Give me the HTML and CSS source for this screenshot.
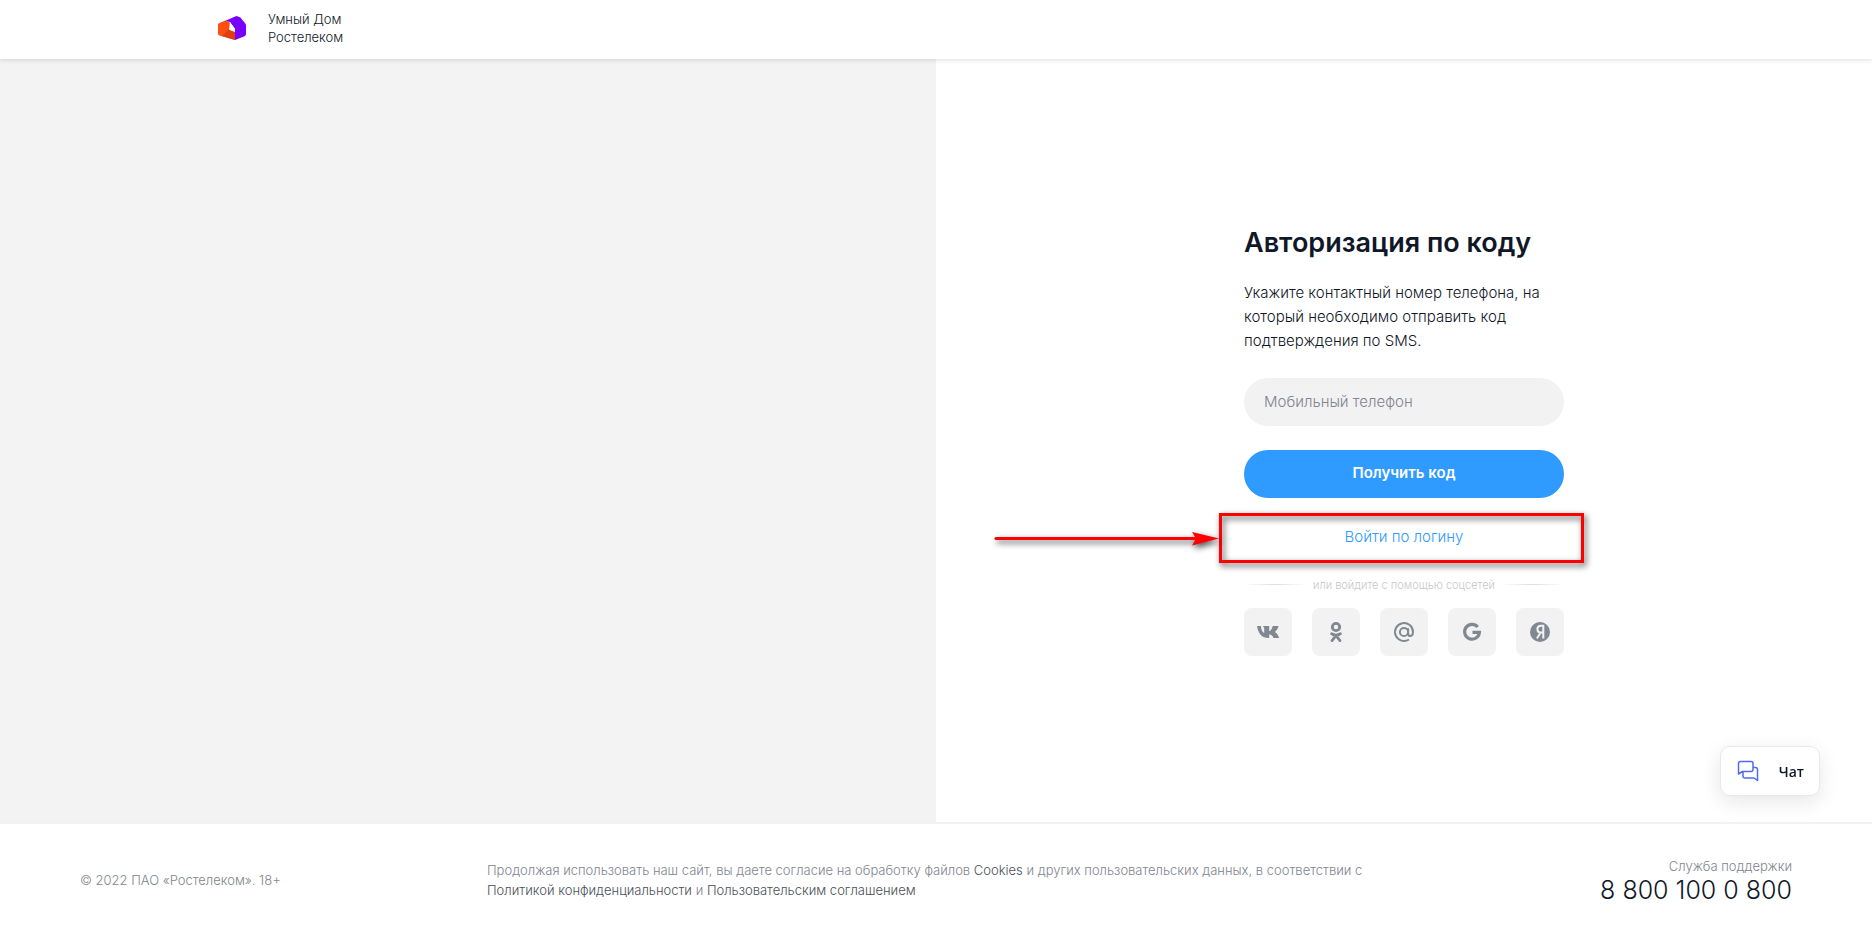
FILE: index.html
```html
<!DOCTYPE html>
<html lang="ru">
<head>
    <meta charset="UTF-8">
    <meta name="viewport" content="width=device-width, initial-scale=1.0">
    <title>Умный Дом Ростелеком</title>
    <link rel="stylesheet" href="styles.css">
</head>
<body>
    <header class="header">
        <a class="logo" href="#">
            <svg class="logo-icon" viewBox="0 0 28 24" aria-hidden="true">
                <path d="M0 9Q0 7.8 1 7.2L8.5 4 12 7V14L17 17V24L1.4 19.4Q0 18.8 0 17.4z" fill="#ff4f12"/>
                <path d="M10.5 13.5 17 15.5V24L4 20z" fill="#e03e10"/>
                <path d="M8 4.5 17.2 .4Q18.6 -.2 20 .4L22.4 1.4 27.3 7.6Q28 8.5 28 9.8V18.1Q28 19.6 26.6 20.2L17 24V13.5L12.5 6.5Z" fill="#7700ff"/>
                <path d="M12 6.5 17 12.5V16L11 13.8z" fill="#fff"/>
            </svg>
            <span>Умный Дом<br>Ростелеком</span>
        </a>
    </header>

    <main class="main">
        <div class="promo"></div>
        <section class="auth">
            <form class="auth-form">
                <h1>Авторизация по коду</h1>
                <p class="hint">Укажите контактный номер телефона, на который необходимо отправить код подтверждения по SMS.</p>
                <input class="phone" type="tel" placeholder="Мобильный телефон" aria-label="Мобильный телефон">
                <button class="submit" type="submit">Получить код</button>
                <div class="login">
                    <a href="#">Войти по логину</a>
                    <div class="mark"></div>
                    <svg class="arrow" viewBox="0 0 226 16" aria-hidden="true">
                        <path d="M3 7.5H205" stroke="#f00" stroke-width="3" stroke-linecap="round"/>
                        <path d="M199 1 226 7.5 199 14.5 203 7.5z" fill="#f00"/>
                    </svg>
                </div>
                <div class="divider">или войдите с помощью соцсетей</div>
                <div class="socials">
                    <a href="#" aria-label="ВКонтакте">
                        <svg viewBox="0 0 24 24"><path d="M12.9 18C5.5 18 2.2 13.4 1 6h3.9c.3 4 1.7 6.3 3.3 7.1V8.2L7 6h6.2v5.1c1.5-.3 2.8-2.2 3.5-5.1h5.8c-.5 2.7-2 4.7-3.6 5.9 1.9 1 3.1 2.9 4.3 6.1h-5.7c-.8-2-2.1-3.3-4.3-3.7V18z"/></svg>
                    </a>
                    <a href="#" aria-label="Одноклассники">
                        <svg viewBox="0 0 24 24"><circle class="line" cx="12" cy="7" r="3.7" stroke-width="2.8"/><path class="line" d="M7.6 13.8Q12 16.6 16.4 13.8M12 15.6 8 20.6M12 15.6 16 20.6" stroke-width="2.8" stroke-linecap="round"/></svg>
                    </a>
                    <a href="#" aria-label="Mail.ru">
                        <svg viewBox="0 0 24 24"><circle class="line" cx="12" cy="12" r="4.1" stroke-width="2"/><path class="line" d="M16.1 8.2V13.4Q16.3 16.2 18.5 16.1 21 15.8 21 12A9 9 0 1 0 17 19.5" stroke-width="2"/></svg>
                    </a>
                    <a href="#" aria-label="Google">
                        <svg viewBox="0 0 24 24"><path class="line" d="M17.7 7A7.4 7.4 0 1 0 19.4 12.4H12.5" stroke-width="3.2"/></svg>
                    </a>
                    <a href="#" aria-label="Яндекс">
                        <svg viewBox="0 0 24 24"><circle cx="12" cy="12" r="10"/><path class="cut" d="M15.3 18.5V5.8H12.8Q9.4 5.8 9.4 9.3 9.4 12.5 12.8 12.5H15.3M12.6 12.5 8.9 18.5" stroke-width="2"/></svg>
                    </a>
                </div>
            </form>
        </section>
    </main>

    <footer class="footer">
        <div class="copyright">© 2022 ПАО «Ростелеком». 18+</div>
        <div class="terms">Продолжая использовать наш сайт, вы даете согласие на обработку файлов <a href="#">Cookies</a> и других пользовательских данных, в соответствии с <a href="#">Политикой конфиденциальности</a> и <a href="#">Пользовательским соглашением</a></div>
        <div class="support">
            <div>Служба поддержки</div>
            <a href="tel:88001000800">8 800 100 0 800</a>
        </div>
    </footer>

    <button class="chat" type="button">
        <svg viewBox="0 0 22 22" aria-hidden="true"><path d="M1.5 14V3.5Q1.5 1.5 3.5 1.5H14Q16 1.5 16 3.5V9.5Q16 11.5 14 11.5H5.5zM16 7.5H18.5Q20.5 7.5 20.5 9.5V20.5L17 18H8Q6 18 6 16V11.5"/></svg>
        Чат
    </button>
</body>
</html>
```

FILE: styles.css
```css
* {
    box-sizing: border-box;
}
body {
    margin: 0;
    min-height: 100vh;
    display: flex;
    flex-direction: column;
    font-family: Inter, "Liberation Sans", sans-serif;
    font-size: 13px;
    font-weight: 300;
    color: #101828;
    background: #fff;
}
a {
    color: inherit;
    text-decoration: none;
}
.header {
    position: relative;
    height: 59px;
    padding: 0 218px;
    box-shadow: 0 0 6px rgba(16, 24, 40, 0.2);
}
.logo {
    display: inline-flex;
    align-items: center;
    gap: 22px;
    height: 55px;
    line-height: 18px;
}
.logo-icon {
    width: 28px;
    height: 24px;
}
.main {
    flex: 1;
    display: grid;
    grid-template-columns: 1fr 1fr;
}
.promo {
    background: #f3f3f3;
}
.auth {
    display: flex;
    align-items: center;
    justify-content: center;
    padding-bottom: 3px;
}
.auth-form {
    width: 320px;
}
h1 {
    margin: 0 0 18px;
    font-size: 27px;
    line-height: 40px;
    font-weight: 600;
    white-space: nowrap;
}
.hint {
    margin: 0 0 25px;
    font-size: 15px;
    line-height: 24px;
}
.phone,
.submit {
    display: block;
    width: 100%;
    height: 48px;
    margin: 0 0 24px;
    padding: 0 20px;
    border: 0;
    border-radius: 24px;
    font: inherit;
    font-size: 15px;
    background: #f2f2f2;
}
.phone::placeholder {
    color: #80858e;
}
.submit {
    margin-bottom: 15px;
    padding-bottom: 2px;
    background: #2f9aff;
    color: #fff;
    font-weight: 600;
}

/* login link with the pointer */
.login {
    position: relative;
}
.login a {
    display: block;
    font-size: 15px;
    line-height: 48px;
    text-align: center;
    color: #2f9aff;
}
.mark {
    position: absolute;
    inset: 0 -20px -2px -25px;
    border: 3px solid #f00;
    filter: drop-shadow(2px 3px 3px rgba(0, 0, 0, 0.7));
    pointer-events: none;
}
.arrow {
    position: absolute;
    top: 18px;
    right: 345px;
    width: 226px;
    height: 16px;
    overflow: visible;
    fill: none;
    filter: drop-shadow(2px 3px 3px rgba(0, 0, 0, 0.7));
}
.divider {
    display: flex;
    align-items: center;
    gap: 6px;
    margin: 17px 0 16px;
    font-size: 11px;
    line-height: 14px;
    white-space: nowrap;
    color: #c8c8c8;
}
.divider::before,
.divider::after {
    content: "";
    flex: 1;
    height: 1px;
    background: linear-gradient(90deg, transparent, #ddd, transparent);
}
.socials {
    display: flex;
    justify-content: space-between;
}
.socials a {
    display: flex;
    align-items: center;
    justify-content: center;
    width: 48px;
    height: 48px;
    border-radius: 8px;
    background: #f2f2f2;
}
.socials svg {
    width: 24px;
    height: 24px;
    fill: #828892;
}
.socials .line {
    fill: none;
    stroke: #828892;
}
.socials .cut {
    fill: none;
    stroke: #f2f2f2;
}
.footer {
    display: grid;
    grid-template-columns: 407px 1fr 407px;
    align-items: center;
    height: 114px;
    padding: 0 80px;
    border-top: 2px solid #f2f2f2;
    line-height: 20px;
    color: #80858e;
}
.terms a {
    color: #4a4f58;
}
.support {
    text-align: right;
}
.support a {
    font-size: 25px;
    line-height: 28px;
    color: #101828;
}
.chat {
    position: fixed;
    right: 52px;
    bottom: 140px;
    display: flex;
    align-items: center;
    gap: 20px;
    height: 50px;
    padding: 0 15px 0 16px;
    border: 1px solid #e6e8eb;
    border-radius: 10px;
    background: #fff;
    box-shadow: 0 6px 20px rgba(16, 24, 40, 0.1);
    font: 600 14px "Open Sans", sans-serif;
    color: #101828;
}
.chat svg {
    width: 22px;
    height: 22px;
    fill: none;
    stroke: #4f6bf5;
    stroke-width: 1.5;
    stroke-linejoin: round;
}
```
